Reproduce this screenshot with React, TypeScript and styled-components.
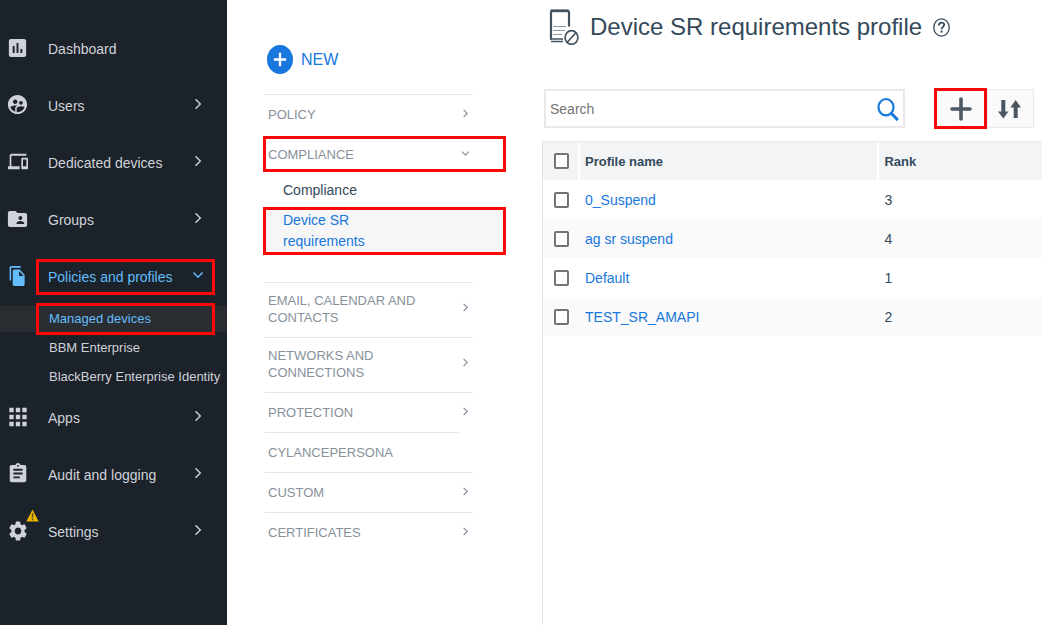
import React from "react";
import styled, { createGlobalStyle, css } from "styled-components";
import {
  MdApps,
  MdAssessment,
  MdAssignment,
  MdDevices,
  MdFileCopy,
  MdFolderShared,
  MdSettings,
  MdSupervisedUserCircle,
} from "react-icons/md";
import type { IconType } from "react-icons";

const red = "#fc0808";
const blue = "#1777dd";

const GlobalStyle = createGlobalStyle`
  *, *::before, *::after { box-sizing: border-box; }
  body {
    margin: 0;
    background: #fff;
    font-family: "Liberation Sans", Arial, sans-serif;
    font-size: 14px;
    color: #34495a;
  }
  button, input { font: inherit; color: inherit; }
  ul { list-style: none; margin: 0; padding: 0; }
  a { text-decoration: none; color: inherit; }
`;

const marked = css`
  outline: 3px solid ${red};
`;

const Page = styled.div`
  display: flex;
  min-height: 100vh;
`;

/* ---- Dark navigation ---- */

const Sidebar = styled.nav`
  flex: 0 0 227px;
  min-width: 0;
  padding-top: 20px;
  background: #1b2229;
  color: #d0d2d9;
`;

const NavRow = styled.div<{ $active?: boolean }>`
  display: flex;
  align-items: center;
  height: 57px;
  padding-right: 15px;
  color: ${(p) => (p.$active ? "#64bdfa" : "inherit")};
`;

const IconSlot = styled.span`
  position: relative;
  flex: 0 0 39px;
  display: flex;
  justify-content: center;
  padding: 0 4px 2px 0;
`;

const NavGlyph = styled.span<{ $width: number; $height: number }>`
  display: flex;
  svg {
    width: ${(p) => p.$width}px;
    height: ${(p) => p.$height}px;
  }
`;

const AlertBadge = styled.span`
  position: absolute;
  top: -10px;
  right: 0;
  display: flex;
`;

const NavButton = styled.button<{ $marked?: boolean }>`
  flex: 1;
  display: flex;
  align-items: center;
  justify-content: space-between;
  height: 30px;
  padding: 0 8px 0 9px;
  border: 0;
  background: none;
  text-align: left;
  white-space: nowrap;
  svg {
    margin-bottom: 4px;
  }
  ${(p) => p.$marked && marked}
`;

const SubList = styled.ul`
  display: flex;
  flex-direction: column;
  gap: 3px;
  padding-top: 1px;
  margin-bottom: -1px;
  font-size: 13px;
`;

const SubRow = styled.li<{ $active?: boolean }>`
  padding: 0 15px 0 39px;
  background: ${(p) => (p.$active ? "#292d32" : "transparent")};
  color: ${(p) => (p.$active ? "#64bdfa" : "inherit")};
`;

const SubLink = styled.a<{ $marked?: boolean }>`
  display: block;
  padding-left: 10px;
  line-height: 26px;
  white-space: nowrap;
  ${(p) => p.$marked && marked}
`;

/* ---- Policy category column ---- */

const Categories = styled.nav`
  flex: 0 0 315px;
  padding: 44px 39px 0 38px;
  color: #87919b;
`;

const NewButton = styled.button`
  display: flex;
  align-items: center;
  gap: 8px;
  height: 30px;
  margin-bottom: 20px;
  padding: 0 0 0 2px;
  border: 0;
  background: none;
  color: ${blue};
  font-size: 16px;
`;

const NewLabel = styled.span`
  padding-top: 2px;
`;

const Section = styled.section<{ $short?: boolean; $plain?: boolean }>`
  position: relative;
  &::before {
    content: "";
    display: ${(p) => (p.$plain ? "none" : "block")};
    position: absolute;
    top: 0;
    left: 0;
    width: ${(p) => (p.$short ? 194 : 208)}px;
    border-top: 1px solid #e6e7e8;
  }
`;

const SectionHead = styled.div<{ $tall?: boolean }>`
  display: flex;
  align-items: center;
  height: ${(p) => (p.$tall ? 55 : 40)}px;
  padding: 0 0 ${(p) => (p.$tall ? 2 : 0)}px 1px;
`;

const SectionButton = styled.button<{ $marked?: boolean }>`
  flex: 1;
  display: flex;
  align-items: center;
  justify-content: space-between;
  min-height: 30px;
  padding: 0 33px 0 2px;
  border: 0;
  background: none;
  font-size: 13px;
  line-height: 17px;
  text-align: left;
  svg {
    margin-bottom: 2px;
  }
  ${(p) => p.$marked && marked}
`;

const SectionLabel = styled.span`
  max-width: 160px;
`;

const ProfileList = styled.ul`
  display: flex;
  flex-direction: column;
  gap: 9px;
  padding: 6px 0 30px 1px;
  color: #34495a;
`;

const ProfileLink = styled.a<{ $active?: boolean }>`
  display: block;
  padding-left: 17px;
  line-height: 21px;
  ${(p) =>
    p.$active &&
    css`
      ${marked}
      padding-right: 120px;
      background: #f6f6f6;
      color: ${blue};
    `}
`;

/* ---- Main panel ---- */

const Main = styled.main`
  flex: 1;
  min-width: 0;
  display: flex;
  flex-direction: column;
`;

const TitleBar = styled.header`
  display: flex;
  align-items: center;
  height: 54px;
  padding-left: 7px;
`;

const Title = styled.h1`
  margin: 0 11px 0 11px;
  font-size: 24px;
  font-weight: 400;
  white-space: nowrap;
`;

const IconButton = styled.button`
  display: flex;
  align-items: center;
  justify-content: center;
  padding: 0;
  border: 0;
  background: none;
`;

const Toolbar = styled.div`
  display: flex;
  align-items: center;
  padding: 35px 8px 13px 2px;
`;

const SearchBox = styled.div`
  flex: 1;
  display: flex;
  align-items: center;
  height: 39px;
  padding: 0 4px;
  border: 2px solid #e9e9e9;
`;

const SearchInput = styled.input`
  flex: 1;
  min-width: 0;
  padding: 0;
  border: 0;
  outline: 0;
  background: none;
  &::placeholder {
    color: #757575;
    opacity: 1;
  }
`;

const ToolGroup = styled.div`
  display: flex;
  align-items: center;
  gap: 3px;
  margin-left: 32px;
`;

const ToolButton = styled(IconButton)<{ $marked?: boolean }>`
  width: 47px;
  height: ${(p) => (p.$marked ? 35 : 39)}px;
  padding-right: ${(p) => (p.$marked ? 0 : 3)}px;
  background: #fafafa;
  ${(p) =>
    p.$marked
      ? marked
      : css`
          border: 1px solid #e9e9e9;
        `}
`;

const TablePanel = styled.div`
  flex: 1;
  border-top: 1px solid #e9e9ea;
  border-left: 1px solid #e3e4e5;
`;

const Table = styled.table`
  width: 100%;
  table-layout: fixed;
  border-collapse: collapse;
`;

const HeadCell = styled.th<{ $width?: string }>`
  width: ${(p) => p.$width ?? "auto"};
  height: 38px;
  padding: 0 5px;
  background: #f3f4f6;
  border-right: 2px solid #fff;
  font-size: 13px;
  text-align: left;
  &:last-child {
    border-right: 0;
  }
`;

const BodyRow = styled.tr`
  &:nth-child(even) {
    background: #fafafa;
  }
`;

const Cell = styled.td`
  height: 39px;
  padding: 0 6px;
`;

const ProfileName = styled.a`
  color: ${blue};
`;

const Check = styled.input`
  appearance: none;
  display: block;
  width: 15px;
  height: 16px;
  margin: 0 0 0 5px;
  border: 2px solid #747474;
  border-radius: 2px;
  background: #fff;
  th & {
    margin-left: 6px;
  }
  &:checked {
    background: #747474;
  }
`;

/* ---- Drawings ---- */

const Chevron = ({ open, size = 12 }: { open?: boolean; size?: number }) => (
  <svg
    width={size}
    height={size}
    viewBox="0 0 12 12"
    fill="none"
    stroke="currentColor"
    strokeWidth={size > 10 ? 1.4 : 1.6}
    aria-hidden="true"
  >
    <path d={open ? "M1.5 3.5 6 8.3l4.5-4.8" : "M3.5 1.2 8.3 6l-4.8 4.8"} />
  </svg>
);

const WarningIcon = () => (
  <svg width="13" height="13" viewBox="0 0 13 13" aria-label="Warning">
    <path d="M6.5.5 12.7 12.5H.3z" fill="#e9b500" />
    <path d="M6.5 4.2v4.2M6.5 9.6v1.6" stroke="#4c4a35" strokeWidth="1.4" />
  </svg>
);

const PlusCircle = () => (
  <svg width="26" height="29" viewBox="0 0 26 29" aria-hidden="true">
    <ellipse cx="13" cy="14.5" rx="13" ry="14.5" fill="#1777dd" />
    <path d="M13 7.8v13.4M6.8 14.5h12.4" stroke="#fff" strokeWidth="2.4" />
  </svg>
);

const ProfileIcon = () => (
  <svg width="30" height="36" viewBox="0 0 30 36" fill="none" stroke="#42525f" aria-hidden="true">
    <path d="M2 30.5V3Q2 2 3 2h16q1 0 1 1v14.5" strokeWidth="2.2" />
    <path d="M1.5 1.8h18" strokeWidth="2.8" />
    <path d="M4 17.5h13M4 21.5h12M4 25.5h9" strokeWidth="1" stroke="#8b969e" />
    <path d="M1 30h13M2 32.5h12" strokeWidth="1.5" />
    <ellipse cx="22.5" cy="28.5" rx="6.4" ry="6.8" strokeWidth="1.7" />
    <path d="m18.2 33.3 8.7-9.5" strokeWidth="1.7" />
  </svg>
);

const HelpIcon = () => (
  <svg width="17" height="19" viewBox="0 0 17 19" fill="none" stroke="#34495a" aria-hidden="true">
    <ellipse cx="8.5" cy="9.5" rx="7.7" ry="8.6" strokeWidth="1.3" />
    <path d="M5.9 7.4c0-3.7 5.3-3.6 5.3-.6 0 2-2.6 2.1-2.6 4.4" strokeWidth="1.8" />
    <path d="M8.6 12.6v2" strokeWidth="2" />
  </svg>
);

const SearchIcon = () => (
  <svg width="22" height="24" viewBox="0 0 22 24" fill="none" stroke="#1777dd" aria-hidden="true">
    <ellipse cx="9" cy="10.2" rx="7.5" ry="8.2" strokeWidth="2.2" />
    <path d="m14.5 16.5 6.3 6.6" strokeWidth="3" />
  </svg>
);

const AddIcon = () => (
  <svg
    width="22"
    height="24"
    viewBox="0 0 22 24"
    stroke="#4d5a64"
    strokeWidth="3.6"
    strokeLinecap="round"
    aria-hidden="true"
  >
    <path d="M11 2v20M2 12h18" />
  </svg>
);

const SortIcon = () => (
  <svg width="23" height="20" viewBox="0 0 23 20" fill="#4a5762" aria-hidden="true">
    <path d="M3.3 1h4v11.5h3.2L5.3 19.5 0 12.5h3.3z" />
    <path d="M15.7 19h4V8.5H23L17.6 1l-5.2 7.5h3.3z" />
  </svg>
);

/* ---- Data ---- */

type NavItem = {
  label: string;
  icon: IconType;
  width: number;
  height: number;
  leaf?: boolean;
  warning?: boolean;
  children?: string[];
};

const navItems: NavItem[] = [
  { label: "Dashboard", icon: MdAssessment, width: 23, height: 24, leaf: true },
  { label: "Users", icon: MdSupervisedUserCircle, width: 23, height: 23 },
  { label: "Dedicated devices", icon: MdDevices, width: 20, height: 23 },
  { label: "Groups", icon: MdFolderShared, width: 23, height: 24 },
  {
    label: "Policies and profiles",
    icon: MdFileCopy,
    width: 19,
    height: 22,
    children: ["Managed devices", "BBM Enterprise", "BlackBerry Enterprise Identity"],
  },
  { label: "Apps", icon: MdApps, width: 26, height: 28 },
  { label: "Audit and logging", icon: MdAssignment, width: 22, height: 23 },
  { label: "Settings", icon: MdSettings, width: 22, height: 24, warning: true },
];

type Category = {
  label: string;
  tall?: boolean;
  short?: boolean;
  leaf?: boolean;
  profiles?: string[];
};

const categories: Category[] = [
  { label: "POLICY" },
  { label: "COMPLIANCE", profiles: ["Compliance", "Device SR requirements"] },
  { label: "EMAIL, CALENDAR AND CONTACTS", tall: true },
  { label: "NETWORKS AND CONNECTIONS", tall: true },
  { label: "PROTECTION" },
  { label: "CYLANCEPERSONA", short: true, leaf: true },
  { label: "CUSTOM" },
  { label: "CERTIFICATES" },
];

const profiles = [
  { name: "0_Suspend", rank: 3 },
  { name: "ag sr suspend", rank: 4 },
  { name: "Default", rank: 1 },
  { name: "TEST_SR_AMAPI", rank: 2 },
];

export default function App() {
  return (
    <>
      <GlobalStyle />
      <Page>
        <Sidebar aria-label="Main">
          {navItems.map(({ icon: Icon, ...item }) => {
            const open = Boolean(item.children);
            return (
              <div key={item.label}>
                <NavRow $active={open}>
                  <IconSlot>
                    <NavGlyph $width={item.width} $height={item.height}>
                      <Icon preserveAspectRatio="none" aria-hidden="true" />
                    </NavGlyph>
                    {item.warning && (
                      <AlertBadge>
                        <WarningIcon />
                      </AlertBadge>
                    )}
                  </IconSlot>
                  <NavButton $marked={open} aria-expanded={item.leaf ? undefined : open}>
                    {item.label}
                    {!item.leaf && <Chevron open={open} />}
                  </NavButton>
                </NavRow>
                {item.children && (
                  <SubList>
                    {item.children.map((child, i) => (
                      <SubRow key={child} $active={i === 0}>
                        <SubLink href="#" $marked={i === 0}>
                          {child}
                        </SubLink>
                      </SubRow>
                    ))}
                  </SubList>
                )}
              </div>
            );
          })}
        </Sidebar>

        <Categories aria-label="Policies and profiles">
          <NewButton>
            <PlusCircle />
            <NewLabel>NEW</NewLabel>
          </NewButton>
          {categories.map((c) => (
            <Section key={c.label} $short={c.short} $plain={Boolean(c.profiles)}>
              <SectionHead $tall={c.tall}>
                <SectionButton
                  $marked={Boolean(c.profiles)}
                  aria-expanded={c.leaf ? undefined : Boolean(c.profiles)}
                >
                  <SectionLabel>{c.label}</SectionLabel>
                  {!c.leaf && <Chevron open={Boolean(c.profiles)} size={9} />}
                </SectionButton>
              </SectionHead>
              {c.profiles && (
                <ProfileList>
                  {c.profiles.map((p, i) => (
                    <li key={p}>
                      <ProfileLink href="#" $active={i === 1}>
                        {p}
                      </ProfileLink>
                    </li>
                  ))}
                </ProfileList>
              )}
            </Section>
          ))}
        </Categories>

        <Main>
          <TitleBar>
            <ProfileIcon />
            <Title>Device SR requirements profile</Title>
            <IconButton aria-label="Help">
              <HelpIcon />
            </IconButton>
          </TitleBar>
          <Toolbar>
            <SearchBox>
              <SearchInput type="text" placeholder="Search" aria-label="Search" />
              <IconButton aria-label="Run search">
                <SearchIcon />
              </IconButton>
            </SearchBox>
            <ToolGroup>
              <ToolButton $marked aria-label="Add profile">
                <AddIcon />
              </ToolButton>
              <ToolButton aria-label="Change ranking">
                <SortIcon />
              </ToolButton>
            </ToolGroup>
          </Toolbar>
          <TablePanel>
            <Table>
              <thead>
                <tr>
                  <HeadCell $width="36px">
                    <Check type="checkbox" aria-label="Select all profiles" />
                  </HeadCell>
                  <HeadCell $width="60%">Profile name</HeadCell>
                  <HeadCell>Rank</HeadCell>
                </tr>
              </thead>
              <tbody>
                {profiles.map((p) => (
                  <BodyRow key={p.name}>
                    <Cell>
                      <Check type="checkbox" aria-label={`Select ${p.name}`} />
                    </Cell>
                    <Cell>
                      <ProfileName href="#">{p.name}</ProfileName>
                    </Cell>
                    <Cell>{p.rank}</Cell>
                  </BodyRow>
                ))}
              </tbody>
            </Table>
          </TablePanel>
        </Main>
      </Page>
    </>
  );
}
